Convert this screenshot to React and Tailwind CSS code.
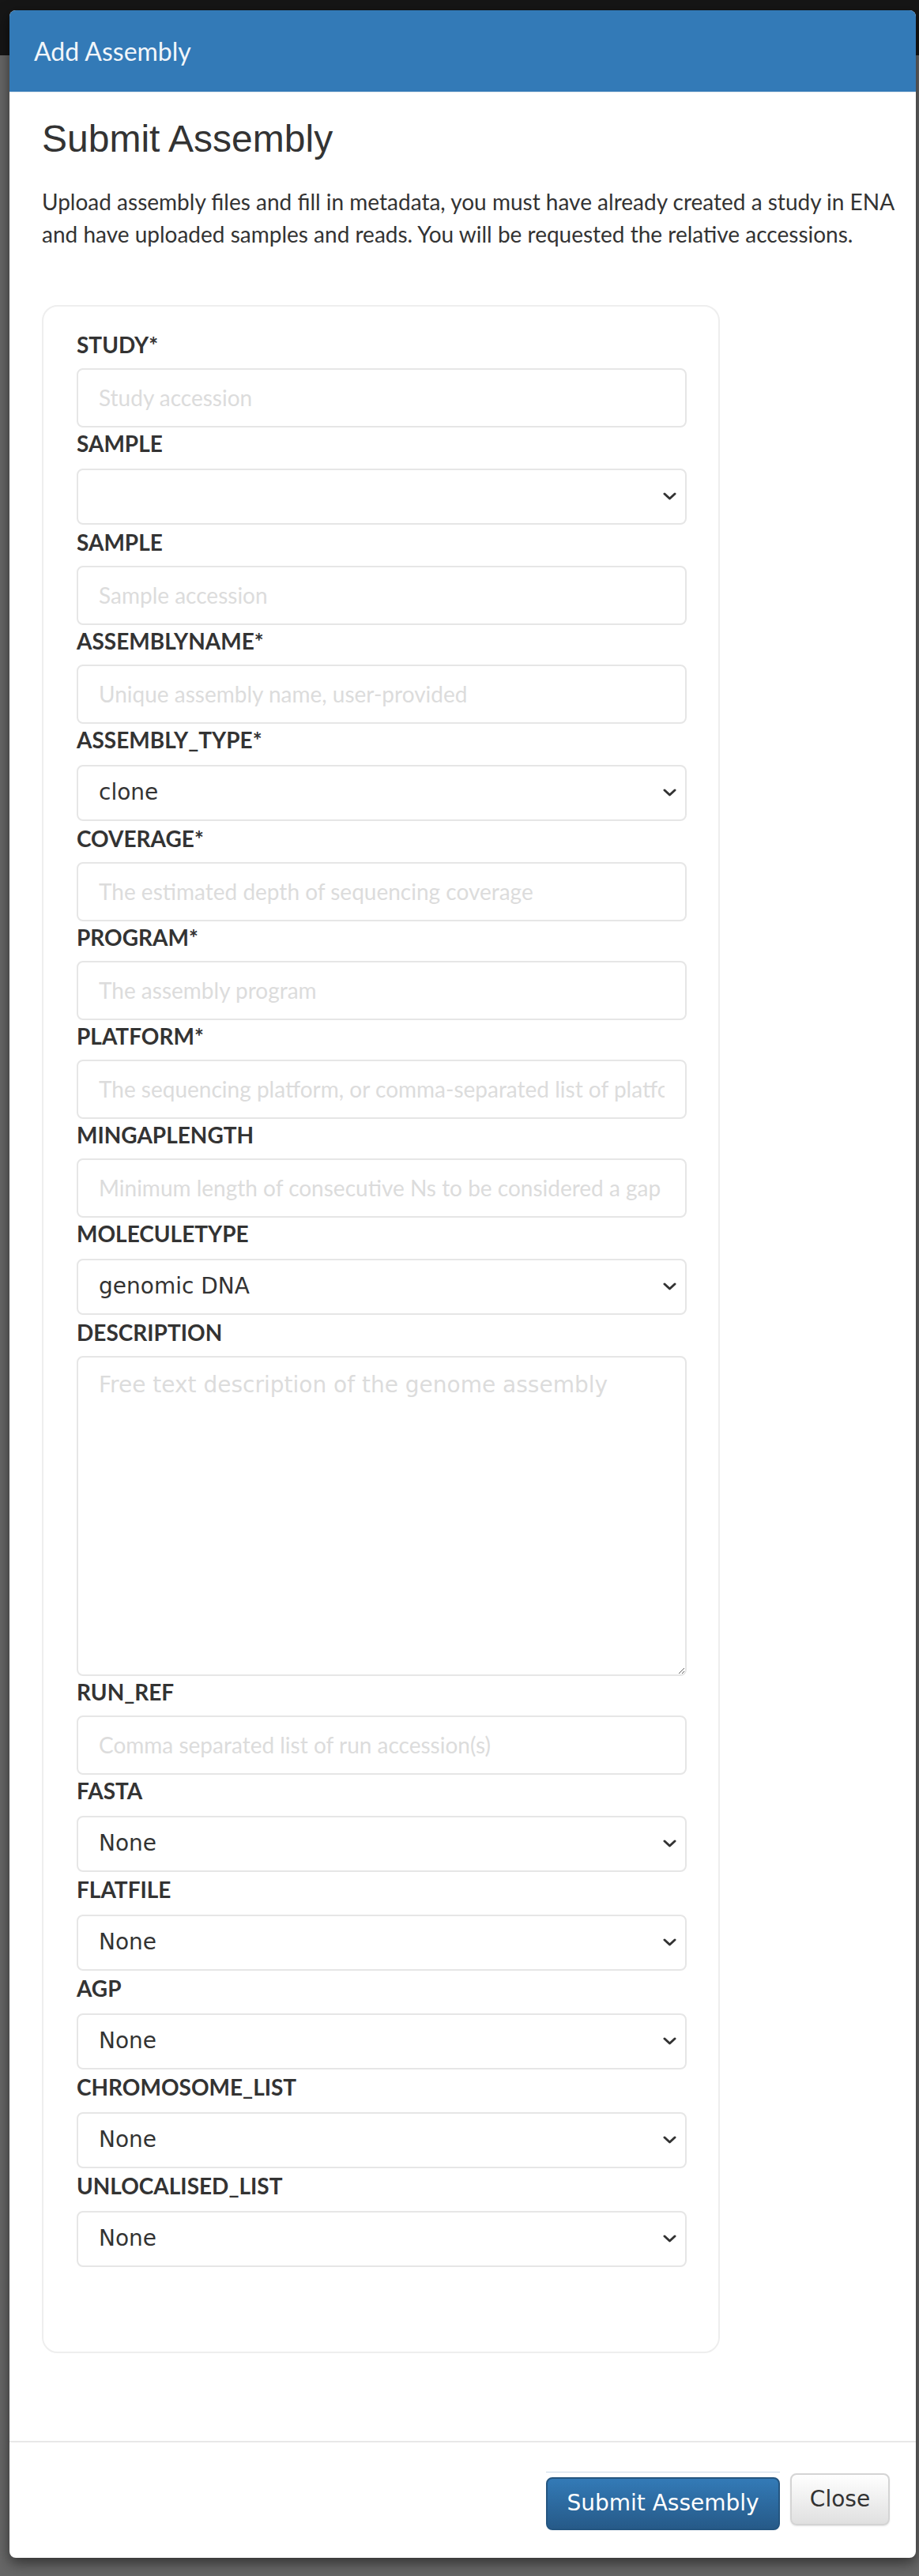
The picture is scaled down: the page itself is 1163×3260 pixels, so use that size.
import React from "react";

function Chevron() {
  return (
    <svg
      width="17"
      height="11"
      viewBox="0 0 17 11"
      className="pointer-events-none absolute right-[11px] top-1/2 -translate-y-1/2"
    >
      <path d="M2 2.5 L8.5 8.5 L15 2.5" fill="none" stroke="#333" strokeWidth="3" strokeLinecap="round" strokeLinejoin="round" />
    </svg>
  );
}

function Label({ children }) {
  return (
    <div className="mb-[10px] h-[40px] font-['Lato',sans-serif] text-[28px] font-bold leading-[40px] text-[#333]">
      {children}
    </div>
  );
}

function TextInput({ placeholder }) {
  return (
    <input
      type="text"
      placeholder={placeholder}
      className="block h-[75px] w-full rounded-[8px] border-2 border-[#e6e6e6] bg-white px-[26px] font-['Lato',sans-serif] text-[28px] leading-[40px] text-[#333] outline-none placeholder:text-[#dcdcdc]"
    />
  );
}

function Select({ value }) {
  return (
    <div className="relative my-[2px] h-[71px] w-full rounded-[8px] border-2 border-[#e6e6e6] bg-white">
      <div className="flex h-full items-center pl-[26px] font-['DejaVu_Sans',sans-serif] text-[28px] text-[#333]">
        {value}
      </div>
      <Chevron />
    </div>
  );
}

function Row({ label, children }) {
  return (
    <div className="flex flex-col">
      <Label>{label}</Label>
      {children}
    </div>
  );
}

export default function App() {
  return (
    <div className="min-h-[3260px] w-[1163px] overflow-hidden bg-[linear-gradient(to_bottom,#161616_70px,#676767_70px)] pt-[13px]">
      <div className="ml-[12px] w-[1147px] overflow-hidden rounded-[8px] bg-white shadow-[0_6px_18px_rgba(0,0,0,0.55)]">
        {/* header */}
        <div className="flex h-[104px] items-center border-b border-[#dfe6ee] bg-[#337ab7] pl-[31px]">
          <span className="font-['Lato',sans-serif] text-[32px] leading-[46px] text-[#f2f6fa]">Add Assembly</span>
        </div>

        {/* body */}
        <div className="pl-[41px] pr-[16px] pt-[33px] pb-[111px]">
          <h3 className="font-['Liberation_Sans',Arial,sans-serif] text-[48px] font-normal leading-[1.1] text-[#333]">
            Submit Assembly
          </h3>
          <p className="mt-[32px] whitespace-nowrap font-['Lato',sans-serif] text-[28px] leading-[41px] text-[#333]">
            Upload assembly files and fill in metadata, you must have already created a study in ENA
            <br />
            and have uploaded samples and reads. You will be requested the relative accessions.
          </p>

          <div className="mt-[69px] flex w-[858px] flex-col rounded-[20px] border-2 border-[#eeeeee] pl-[42px] pr-[40px] pt-[28px] pb-[105px]">
            <Row label="STUDY*">
              <TextInput placeholder="Study accession" />
            </Row>
            <Row label="SAMPLE">
              <Select value="" />
            </Row>
            <Row label="SAMPLE">
              <TextInput placeholder="Sample accession" />
            </Row>
            <Row label="ASSEMBLYNAME*">
              <TextInput placeholder="Unique assembly name, user-provided" />
            </Row>
            <Row label="ASSEMBLY_TYPE*">
              <Select value="clone" />
            </Row>
            <Row label="COVERAGE*">
              <TextInput placeholder="The estimated depth of sequencing coverage" />
            </Row>
            <Row label="PROGRAM*">
              <TextInput placeholder="The assembly program" />
            </Row>
            <Row label="PLATFORM*">
              <TextInput placeholder="The sequencing platform, or comma-separated list of platforms" />
            </Row>
            <Row label="MINGAPLENGTH">
              <TextInput placeholder="Minimum length of consecutive Ns to be considered a gap" />
            </Row>
            <Row label="MOLECULETYPE">
              <Select value="genomic DNA" />
            </Row>
            <Row label="DESCRIPTION">
              <textarea
                placeholder="Free text description of the genome assembly"
                className="block h-[405px] w-full resize-y rounded-[8px] border-2 border-[#e6e6e6] bg-white px-[26px] pt-[15px] font-['DejaVu_Sans',sans-serif] text-[28px] leading-[40px] text-[#333] outline-none placeholder:text-[#dcdcdc]"
              />
            </Row>
            <Row label="RUN_REF">
              <TextInput placeholder="Comma separated list of run accession(s)" />
            </Row>
            <Row label="FASTA">
              <Select value="None" />
            </Row>
            <Row label="FLATFILE">
              <Select value="None" />
            </Row>
            <Row label="AGP">
              <Select value="None" />
            </Row>
            <Row label="CHROMOSOME_LIST">
              <Select value="None" />
            </Row>
            <Row label="UNLOCALISED_LIST">
              <Select value="None" />
            </Row>
          </div>
        </div>

        {/* footer */}
        <div className="flex items-start justify-end gap-[13px] border-t-2 border-[#e8e8e8] pt-[37px] pb-[35px] pr-[33px]">
          <div className="flex flex-col gap-[6px]">
            <div className="h-px w-[296px] bg-[#c9d8e8]" />
            <button className="h-[67px] w-[296px] rounded-[8px] border-2 border-[#245580] bg-[linear-gradient(to_bottom,#337ab7,#265a88)] font-['DejaVu_Sans',sans-serif] text-[28px] text-white">
              Submit Assembly
            </button>
          </div>
          <button className="mt-[2px] h-[66px] w-[126px] rounded-[8px] border-2 border-[#d4d4d4] bg-[linear-gradient(to_bottom,#ffffff,#e0e0e0)] font-['DejaVu_Sans',sans-serif] text-[28px] text-[#333] shadow-[0_1px_2px_rgba(0,0,0,0.1)]">
            Close
          </button>
        </div>
      </div>
    </div>
  );
}
